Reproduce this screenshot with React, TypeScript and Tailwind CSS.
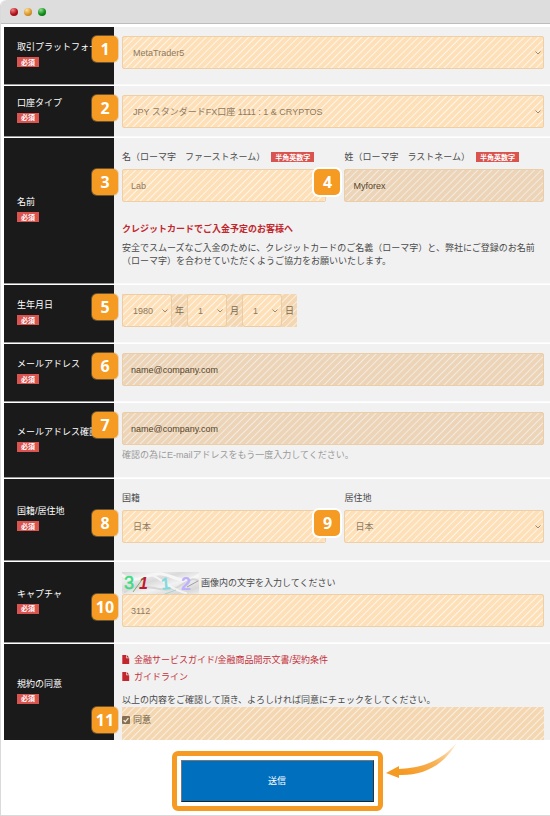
import type { ReactNode, InputHTMLAttributes } from "react";
import clsx from "clsx";

const STRIPES =
  "bg-[repeating-linear-gradient(135deg,#fddfb8_0px,#fddfb8_3px,#fff6ea_4px,#fddfb8_5px)]";
const STRIPES_DARK =
  "bg-[repeating-linear-gradient(135deg,#edd4b6_0px,#edd4b6_3px,#f0ebe4_4px,#edd4b6_5px)]";
const STRIPES_MID =
  "bg-[repeating-linear-gradient(135deg,#f4d7b0_0px,#f4d7b0_3px,#f8efe2_4px,#f4d7b0_5px)]";

function Step({ n, ring }: { n: number; ring?: boolean }) {
  return (
    <span
      className={clsx(
        "absolute -left-[30px] top-0 z-10 flex h-[26px] w-[26px] items-center justify-center rounded-[5px] bg-[#f59a22] font-['Noto_Sans',sans-serif] text-base font-bold leading-none text-white",
        ring ? "ring-2 ring-white" : "ring-1 ring-[#d9a860]/40",
      )}
    >
      {n}
    </span>
  );
}

function Chevron({ className }: { className: string }) {
  return (
    <svg
      viewBox="0 0 6 4"
      className={clsx("pointer-events-none absolute top-1/2 h-1 w-1.5 -translate-y-1/2", className)}
      fill="none"
      stroke="#a08a6c"
      strokeWidth="1"
    >
      <path d="M0.5 0.5 L3 3 L5.5 0.5" />
    </svg>
  );
}

function Tag({ children }: { children: ReactNode }) {
  return (
    <span className="inline-flex h-[10px] items-center bg-[#d9534f] px-1 text-[7px] font-bold leading-none text-white">
      {children}
    </span>
  );
}

function Row({
  label,
  htmlFor,
  children,
  className,
  last,
}: {
  label: string;
  htmlFor: string;
  children: ReactNode;
  className: string;
  last?: boolean;
}) {
  return (
    <div className={clsx("flex", !last && "border-b border-white")}>
      <div
        className={clsx(
          "flex w-[110px] shrink-0 flex-col items-start justify-center gap-[3px] bg-[#1a1a1a] pb-1 pl-[13px] text-white",
          !last && "border-b border-b-[#999]",
        )}
      >
        <label htmlFor={htmlFor} className="whitespace-nowrap leading-[14px]">
          {label}
        </label>
        <Tag>必須</Tag>
      </div>
      <div
        className={clsx(
          "min-w-0 flex-1 bg-[#f1f1f1] pl-2 pr-1.5",
          !last && "border-b border-b-[#fafafa]",
          className,
        )}
      >
        {children}
      </div>
    </div>
  );
}

function Select({ id, n, value, ring }: { id: string; n: number; value: string; ring?: boolean }) {
  return (
    <div className="relative">
      <Step n={n} ring={ring} />
      <select
        id={id}
        className={clsx(
          "block h-[33px] w-full appearance-none rounded-[2px] border border-[#efcfa5] px-[10px] text-[#8d7a5f] outline-none",
          STRIPES,
        )}
      >
        <option>{value}</option>
      </select>
      <Chevron className="right-[3px]" />
    </div>
  );
}

function Input({
  n,
  ring,
  dark,
  ...rest
}: { n: number; ring?: boolean; dark?: boolean } & InputHTMLAttributes<HTMLInputElement>) {
  return (
    <div className="relative">
      <Step n={n} ring={ring} />
      <input
        className={clsx(
          "block h-[33px] w-full rounded-[2px] border px-2 outline-none",
          dark
            ? "border-[#ebcda6] text-[#56452d]"
            : "border-[#efcfa5] text-[#8d7a5f]",
          dark ? STRIPES_DARK : STRIPES,
        )}
        {...rest}
      />
    </div>
  );
}

function DateSelect({
  label,
  value,
  unit,
  width,
  id,
}: {
  label: string;
  value: string;
  unit: string;
  width: string;
  id?: string;
}) {
  return (
    <>
      <div className={clsx("relative", width)}>
        <select
          id={id}
          aria-label={label}
          className={clsx(
            "block h-[33px] w-full appearance-none rounded-[3px] border border-[#edcda3] px-[10px] text-[#8d7a5f] outline-none",
            STRIPES,
          )}
        >
          <option>{value}</option>
        </select>
        <Chevron className="right-1" />
      </div>
      <span className="flex w-[15px] justify-center text-[#7c6a50]">{unit}</span>
    </>
  );
}

function DocLink({ children }: { children: ReactNode }) {
  return (
    <a href="#" className="flex h-[17px] items-center gap-1 text-[#c4303a]">
      <svg viewBox="0 0 8 9" className="h-[9px] w-2" fill="#c1272d">
        <path d="M0.3 0 H4.2 V3.2 H7.2 V9 H0.3 Z" />
        <path d="M4.8 0 L7.2 2.6 H4.8 Z" />
      </svg>
      {children}
    </a>
  );
}

function Captcha() {
  return (
    <svg
      viewBox="0 0 77 22"
      className="h-[22px] w-[77px]"
      role="img"
      fontFamily="'Liberation Sans', sans-serif"
    >
      <defs>
        <linearGradient id="fog" x1="0" y1="0" x2="1" y2="1">
          <stop offset="0" stopColor="#d6d6d6" />
          <stop offset="0.2" stopColor="#eeeeee" />
          <stop offset="0.4" stopColor="#dadada" />
          <stop offset="0.6" stopColor="#f2f2f2" />
          <stop offset="0.85" stopColor="#d8d8d8" />
          <stop offset="1" stopColor="#ececec" />
        </linearGradient>
      </defs>
      <rect width="77" height="22" fill="url(#fog)" />
      <g fill="none" strokeLinecap="round">
        <path d="M0 3 C14 14 26 0 40 2 S60 14 77 3" stroke="#f6f6f6" strokeWidth="3" />
        <path d="M3 20 C20 6 40 24 56 15 S70 6 77 9" stroke="#d6d6d6" strokeWidth="2" />
        <path d="M30 3 C44 10 50 18 64 21" stroke="#f4f4f4" strokeWidth="2" />
      </g>
      <text x="2" y="17" fontSize="18" fill="#3ddc84" stroke="#3ddc84" strokeWidth="0.5">3</text>
      <text x="17" y="17" fontSize="16" fill="#c4162a" fontWeight="bold" fontStyle="italic">1</text>
      <text x="39" y="17" fontSize="16" fill="#7fdbdc" stroke="#7fdbdc" strokeWidth="0.8" transform="rotate(-6 43 11)">1</text>
      <text x="59" y="18" fontSize="18" fill="#c0b0fa" fontWeight="bold">2</text>
      <path d="M11 20 L22 5" stroke="#6f9a58" strokeWidth="0.8" />
      <path d="M65 15 L76 9" stroke="#8d8d95" strokeWidth="0.8" />
      <path d="M43 22 L54 18" stroke="#9ccfc8" strokeWidth="0.8" />
    </svg>
  );
}

export default function App() {
  return (
    <div className="rounded-tl-[6px] border-b border-l border-[#dadada] bg-white font-['Liberation_Sans','Noto_Sans_CJK_JP',sans-serif] text-[9px] leading-[14px] text-[#4a4a4a]">
      <header className="flex h-6 items-center gap-[6px] rounded-tl-[6px] border-b border-[#bdbdbd] bg-[#dddddd] pl-[9px]">
        <span className="h-2 w-2 rounded-full bg-[radial-gradient(circle_at_35%_25%,#ee8585,#b5121b_55%,#7c0a10)]" />
        <span className="h-2 w-2 rounded-full bg-[radial-gradient(circle_at_35%_25%,#fbe0a0,#dd9a2c_55%,#a06a18)]" />
        <span className="h-2 w-2 rounded-full bg-[radial-gradient(circle_at_35%_25%,#8fdc8f,#0f8f1a_55%,#075c0e)]" />
      </header>

      <form className="pl-[3px] pt-[3px]" onSubmit={(e) => e.preventDefault()}>
        <Row label="取引プラットフォーム" htmlFor="platform" className="pb-[15px] pt-[9px]">
          <Select id="platform" n={1} value="MetaTrader5" />
        </Row>

        <Row label="口座タイプ" htmlFor="account" className="pb-2 pt-[9px]">
          <Select id="account" n={2} value="JPY スタンダードFX口座 1111 : 1 & CRYPTOS" />
        </Row>

        <Row label="名前" htmlFor="first" className="pb-[15px] pt-3">
          <div className="grid grid-cols-[205fr_200fr] gap-[18px]">
            <div>
              <div className="mb-[5px] flex items-center gap-[6px]">
                <label htmlFor="first" className="whitespace-nowrap">名（ローマ字　ファーストネーム）</label>
                <Tag>半角英数字</Tag>
              </div>
              <Input id="first" n={3} defaultValue="Lab" />
            </div>
            <div>
              <div className="mb-[5px] flex items-center gap-[6px]">
                <label htmlFor="last" className="whitespace-nowrap">姓（ローマ字　ラストネーム）</label>
                <Tag>半角英数字</Tag>
              </div>
              <Input id="last" n={4} ring dark defaultValue="Myforex" />
            </div>
          </div>
          <p className="mt-5 font-bold text-[#c1272d]">クレジットカードでご入金予定のお客様へ</p>
          <p className="mt-[6px] leading-[13px]">
            安全でスムーズなご入金のために、クレジットカードのご名義（ローマ字）と、弊社にご登録のお名前（ローマ字）を合わせていただくようご協力をお願いいたします。
          </p>
        </Row>

        <Row label="生年月日" htmlFor="year" className="pb-[15px] pt-[9px]">
          <div className={clsx("relative flex w-[175px] items-center", STRIPES_MID)}>
            <Step n={5} />
            <DateSelect id="year" label="年" value="1980" unit="年" width="w-[50px]" />
            <DateSelect label="月" value="1" unit="月" width="w-10" />
            <DateSelect label="日" value="1" unit="日" width="w-10" />
          </div>
        </Row>

        <Row label="メールアドレス" htmlFor="email" className="pb-[15px] pt-[9px]">
          <Input id="email" type="email" n={6} dark defaultValue="name@company.com" />
        </Row>

        <Row label="メールアドレス確認" htmlFor="email2" className="pb-[15px] pt-[9px]">
          <Input id="email2" type="email" n={7} dark defaultValue="name@company.com" />
          <p className="mt-[3px] text-[#9a9a9a]">確認の為にE-mailアドレスをもう一度入力してください。</p>
        </Row>

        <Row label="国籍/居住地" htmlFor="nation" className="pb-[17px] pt-3">
          <div className="grid grid-cols-[205fr_200fr] gap-[18px]">
            <div>
              <label htmlFor="nation" className="mb-[5px] block">国籍</label>
              <Select id="nation" n={8} value="日本" />
            </div>
            <div>
              <label htmlFor="residence" className="mb-[5px] block">居住地</label>
              <Select id="residence" n={9} ring value="日本" />
            </div>
          </div>
        </Row>

        <Row label="キャプチャ" htmlFor="captcha" className="pb-[15px] pt-[10px]">
          <div className="flex items-center gap-0.5">
            <Captcha />
            <span>画像内の文字を入力してください</span>
          </div>
          <Input id="captcha" n={10} defaultValue="3112" />
        </Row>

        <Row label="規約の同意" htmlFor="agree" className="pt-[7px]" last>
          <DocLink>金融サービスガイド/金融商品開示文書/契約条件</DocLink>
          <DocLink>ガイドライン</DocLink>
          <p className="mt-2">以上の内容をご確認して頂き、よろしければ同意にチェックをしてください。</p>
          <div className={clsx("relative h-[33px]", STRIPES_MID)}>
            <Step n={11} />
            <label className="flex items-center gap-[3px] pt-[6px] text-[#6f5d45]">
              <span className="relative flex">
                <input
                  id="agree"
                  type="checkbox"
                  defaultChecked
                  className="h-2 w-2 appearance-none rounded-[1px] bg-[#857055]"
                />
                <svg
                  viewBox="0 0 8 8"
                  className="pointer-events-none absolute inset-0 h-2 w-2"
                  fill="none"
                  stroke="#f8ead6"
                  strokeWidth="1.3"
                >
                  <path d="M1.6 4.2 L3.3 5.8 L6.4 2.2" />
                </svg>
              </span>
              同意
            </label>
          </div>
        </Row>

        <div className="flex justify-center pb-1 pt-[11px]">
          <div className="relative h-[60px] w-[211px] rounded-[6px] border-[5px] border-[#f59a22] p-1">
            <button
              type="submit"
              className="h-full w-full border border-b-[#222] border-l-[#777] border-r-[#333] border-t-[#777] bg-[#0070be] text-white"
            >
              送信
            </button>
            <svg viewBox="0 0 72 38" className="absolute -right-20 -top-[14px] h-[38px] w-[72px]">
              <defs>
                <linearGradient id="tail" x1="0" y1="1" x2="1" y2="0">
                  <stop offset="0.2" stopColor="#f59a22" />
                  <stop offset="0.55" stopColor="#f7b155" />
                  <stop offset="1" stopColor="#fef3e2" />
                </linearGradient>
              </defs>
              <path d="M0 31 L13 24 V27 C36 26 56 19 71 0 C58 24 36 34 13 33 V36 Z" fill="url(#tail)" />
            </svg>
          </div>
        </div>
      </form>
    </div>
  );
}
